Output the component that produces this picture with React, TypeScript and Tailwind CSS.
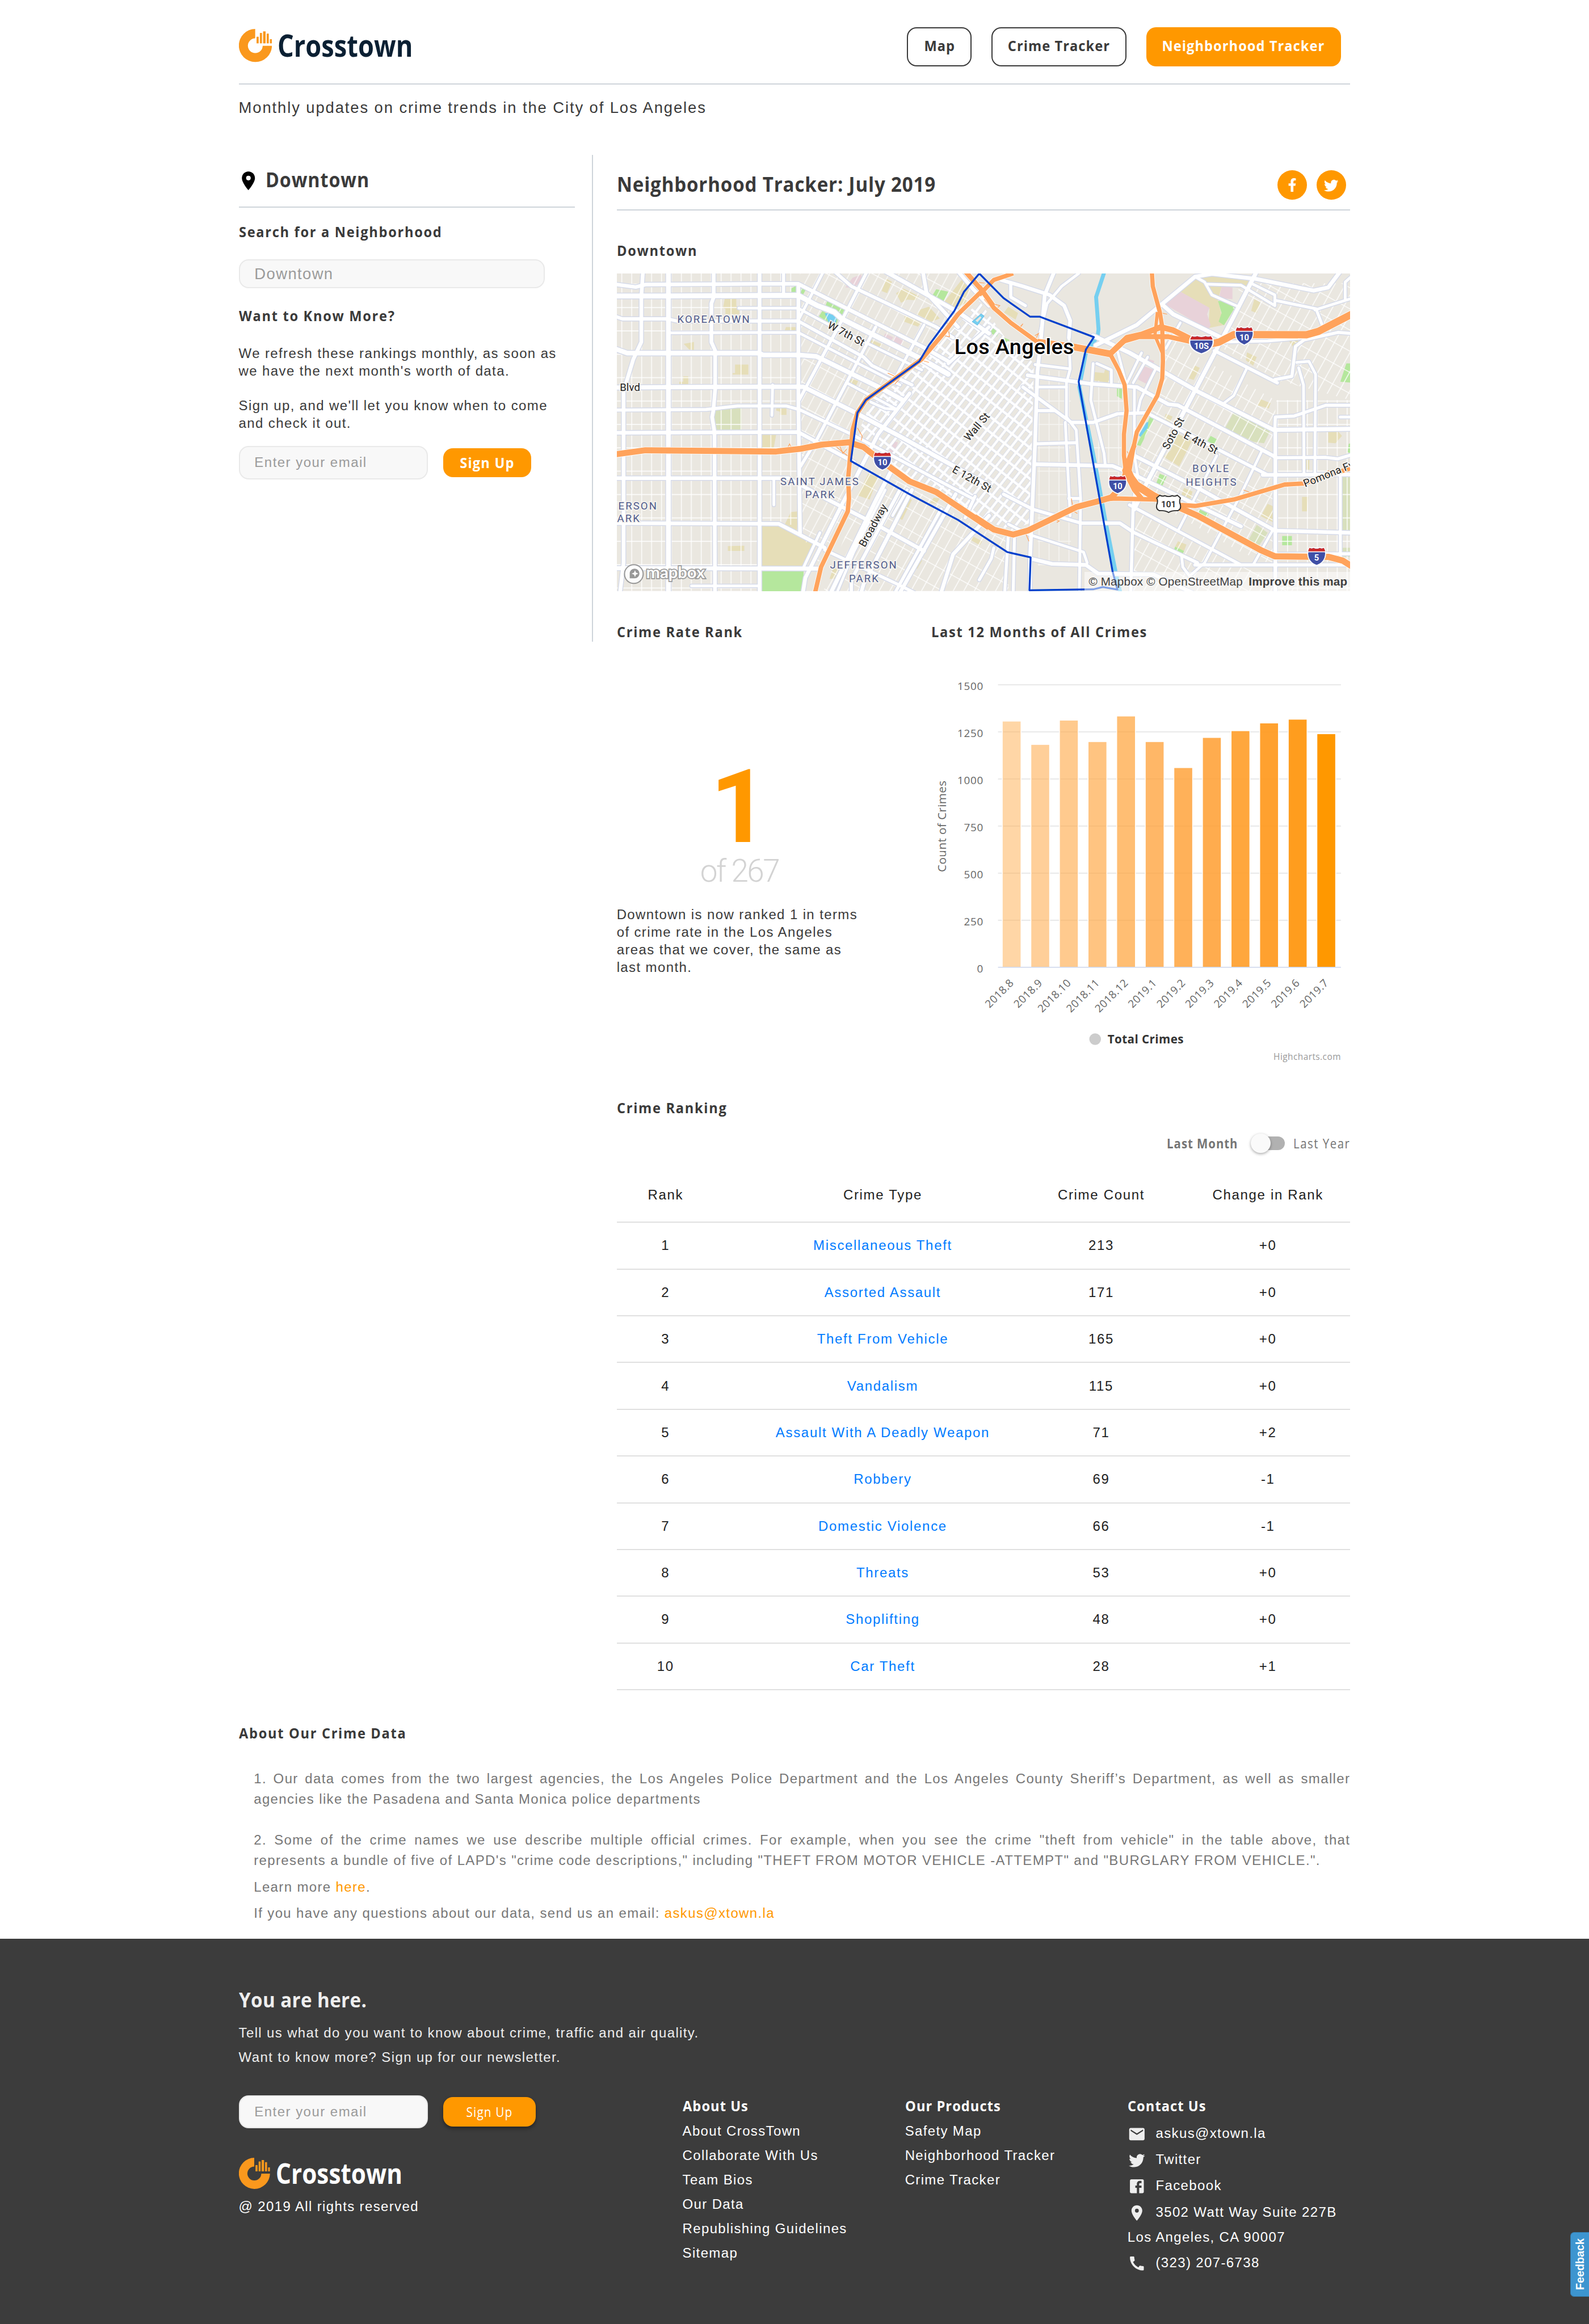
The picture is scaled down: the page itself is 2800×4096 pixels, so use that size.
import type { ReactNode } from "react";
import { MdCall, MdEmail, MdPlace } from "react-icons/md";
import { FaFacebookF } from "react-icons/fa";

/* ---------- shared pieces ---------- */

const TWITTER_PATH =
  "M22.46,6C21.69,6.35 20.86,6.58 20,6.69C20.88,6.16 21.56,5.32 21.88,4.31C21.05,4.81 20.13,5.16 19.16,5.36C18.37,4.5 17.26,4 16,4C13.65,4 11.73,5.92 11.73,8.29C11.73,8.63 11.77,8.96 11.84,9.27C8.28,9.09 5.11,7.38 3,4.79C2.63,5.42 2.42,6.16 2.42,6.94C2.42,8.43 3.17,9.75 4.33,10.5C3.62,10.5 2.96,10.3 2.38,10V10.03C2.38,12.11 3.86,13.85 5.82,14.24C5.46,14.34 5.08,14.39 4.69,14.39C4.42,14.39 4.15,14.36 3.89,14.31C4.43,16 6,17.26 7.89,17.29C6.43,18.45 4.58,19.13 2.56,19.13C2.22,19.13 1.88,19.11 1.54,19.07C3.44,20.29 5.7,21 8.12,21C16,21 20.33,14.46 20.33,8.79C20.33,8.6 20.33,8.42 20.32,8.23C21.16,7.63 21.88,6.87 22.46,6Z";
const FACEBOOK_BOX_PATH =
  "M5,3H19A2,2 0 0,1 21,5V19A2,2 0 0,1 19,21H5A2,2 0 0,1 3,19V5A2,2 0 0,1 5,3M18,5H15.5A3.5,3.5 0 0,0 12,8.5V11H10V14H12V21H15V14H18V11H15V9A1,1 0 0,1 16,8H18V5Z";

function TwitterIcon({ className }: { className: string }) {
  return (
    <svg viewBox="0 0 24 24" className={className} fill="currentColor">
      <path d={TWITTER_PATH} />
    </svg>
  );
}

function FacebookBoxIcon({ className }: { className: string }) {
  return (
    <svg viewBox="0 0 24 24" className={className} fill="currentColor">
      <path d={FACEBOOK_BOX_PATH} />
    </svg>
  );
}

function LogoMark({ className }: { className: string }) {
  return (
    <svg viewBox="0 0 34 34" className={className} fill="#fa981d">
      <path d="M16.7 0A17 17 0 1 0 33.9 17.3H24.4A7.6 7.6 0 1 1 16.7 9.6Z" />
      <rect x="18.1" y="8" width="2.2" height="6.8" />
      <rect x="21.5" y="4.1" width="2.2" height="10.7" />
      <rect x="24.8" y="2.5" width="2.6" height="12.3" />
      <rect x="28.5" y="4.8" width="2.2" height="10" />
      <rect x="31.8" y="10.5" width="2" height="4.3" />
    </svg>
  );
}

function SubHeading({ children }: { children: ReactNode }) {
  return (
    <h3 className="origin-left scale-x-[0.92] font-['Open_Sans',sans-serif] text-[15px] leading-[20px] font-bold tracking-[1.05px] whitespace-nowrap text-[#3a3a3a]">
      {children}
    </h3>
  );
}

/* ---------- header ---------- */

function Header() {
  return (
    <header>
      <div className="flex h-[87px] items-start justify-between border-b-[1.2px] border-[#ced4da] pt-[28px]">
        <div className="mt-[2px] flex items-start gap-[6px]">
          <LogoMark className="h-[34px] w-[34px]" />
          <span className="origin-left scale-x-[0.85] font-['Open_Sans',sans-serif] text-[31px] leading-[34px] font-bold text-[#0b2033]">
            Crosstown
          </span>
        </div>
        <nav className="mr-[9.5px] flex gap-[20px] font-['Open_Sans',sans-serif] text-[15px] font-bold tracking-[0.65px] whitespace-nowrap text-[#3a3a3a]">
          <a className="flex h-[40px] w-[66.5px] items-center justify-center rounded-[10px] border-[1.2px] border-[#3a3a3a] pb-[2px]">
            <span className="scale-x-[0.92]">Map</span>
          </a>
          <a className="flex h-[40px] w-[139px] items-center justify-center rounded-[10px] border-[1.2px] border-[#3a3a3a] pb-[2px]">
            <span className="scale-x-[0.92]">Crime Tracker</span>
          </a>
          <a className="flex h-[40px] w-[200px] items-center justify-center rounded-[10px] bg-[#ff9800] pb-[2px] text-white">
            <span className="scale-x-[0.92]">Neighborhood Tracker</span>
          </a>
        </nav>
      </div>
      <p className="pt-[11.5px] text-[16px] leading-[24px] tracking-[1.09px]">
        Monthly updates on crime trends in the City of Los Angeles
      </p>
    </header>
  );
}

/* ---------- sidebar ---------- */

function Sidebar() {
  return (
    <aside className="h-[500px] w-[364px] shrink-0 border-r-[1.2px] border-[#ced4da] pt-[11px] pr-[17.8px]">
      <div className="flex h-[42px] items-start">
        <MdPlace className="mt-[4px] -ml-[1.8px] h-[23px] w-[23px] text-black" />
        <h2 className="ml-[6.5px] origin-left scale-x-[0.92] font-['Open_Sans',sans-serif] text-[20.5px] leading-[28px] font-bold tracking-[0.55px]">
          Downtown
        </h2>
      </div>
      <div className="mb-[15px] h-px bg-[#ced4da]" />
      <SubHeading>Search for a Neighborhood</SubHeading>
      <div className="mt-[18px] mb-[18px] flex h-[30px] w-[314px] items-center rounded-[10px] border-[1.2px] border-[#e9e9e9] bg-[#f8f8f8] pl-[15px] text-[16px] tracking-[0.8px] text-[#9b9b9b]">
        Downtown
      </div>
      <SubHeading>Want to Know More?</SubHeading>
      <p className="mt-[20px] text-[14px] leading-[18px] tracking-[0.8px]">
        We refresh these rankings monthly, as soon as
        <br />
        we have the next month's worth of data.
      </p>
      <p className="mt-[18px] text-[14px] leading-[18px] tracking-[0.8px]">
        Sign up, and we'll let you know when to come
        <br />
        and check it out.
      </p>
      <div className="mt-[14px] flex items-center gap-[16px]">
        <div className="flex h-[34px] w-[194px] items-center rounded-[10px] border-[1.2px] border-[#e9e9e9] bg-[#f8f8f8] pl-[15px] text-[14px] tracking-[0.85px] text-[#9b9b9b]">
          Enter your email
        </div>
        <button className="h-[30px] w-[90px] rounded-[10px] bg-[#ff9800] text-center font-['Open_Sans',sans-serif] text-[15px] leading-[28px] font-bold tracking-[0.74px] text-white">
          <span className="inline-block scale-x-[0.92]">Sign Up</span>
        </button>
      </div>
    </aside>
  );
}

/* ---------- map ---------- */

/* The map artwork is digitised in two sheets, west and east of downtown. */
type Sheet = "w" | "e";
const ORIGIN: Record<Sheet, number> = { w: -8, e: 372 };

function pts(sheet: Sheet, raw: string): string {
  return raw
    .split(" ")
    .map((pair) => {
      const [x, y] = pair.split(",").map(Number);
      return `${(x / 4.0205 + ORIGIN[sheet]).toFixed(1)},${((y - 50) / 4.545).toFixed(1)}`;
    })
    .join(" ");
}

const roads: [Sheet, number, string][] = [
  // west: north-south
  ["w", 4, "140,40 133,160 133,370 100,450 60,600 60,1400 45,1540"],
  ["w", 5, "245,40 245,1540"],
  ["w", 4, "432,40 432,160 422,190 422,370 438,410 438,590 430,690 425,720 435,790 437,1540"],
  ["w", 4, "621,40 621,1540"],
  ["w", 3.4, "720,40 720,150"],
  ["w", 4, "781,100 781,640 788,1260"],
  ["w", 3, "675,570 672,712"],
  ["w", 3, "680,1005 680,1130"],
  // west: east-west
  ["w", 4, "20,100 110,113 150,102 620,98 780,98 1290,390 1400,460"],
  ["w", 5.4, "20,155 240,155 780,152 860,200 930,230 960,262 1290,450 1400,520"],
  ["w", 3.6, "20,248 55,262 240,262 280,272 780,272 1050,440 1085,480 1250,570"],
  ["w", 3, "535,212 780,212 900,285 1290,500"],
  ["w", 3, "250,327 780,325 960,430 1200,570"],
  ["w", 5, "20,400 75,422 620,422 635,430 780,430 855,437 1130,590 1210,640"],
  ["w", 4.6, "20,582 240,580 800,578 1000,690 1200,810 1568,1040"],
  ["w", 3.4, "20,687 400,685 530,668 730,668 785,685 1000,800 1500,1100"],
  ["w", 4, "20,793 780,790 1010,930"],
  ["w", 4, "20,1005 740,1005 860,1080 1100,1220 1300,1345"],
  ["w", 4, "20,1215 700,1218 890,1330"],
  ["w", 4.4, "20,1425 860,1427"],
  ["w", 3, "340,1508 620,1508"],
  ["w", 3.4, "890,1340 1190,1500 1260,1540"],
  // west: hillside and Westlake
  ["w", 3.6, "930,40 1000,110 1350,300 1420,350"],
  ["w", 4.4, "1140,40 1440,230 1568,330"],
  ["w", 4, "1295,40 1310,140 1440,300"],
  ["w", 4, "1440,40 1500,120 1568,200"],
  ["w", 3, "885,40 780,270"],
  ["w", 3.4, "1065,40 960,270 785,640"],
  ["w", 3.4, "1100,300 860,820 790,950"],
  ["w", 3, "1300,290 1170,560"],
  ["w", 3, "980,560 860,820"],
  ["w", 3.6, "1400,470 1568,300"],
  ["w", 3, "980,560 1180,680"],
  ["w", 3, "1080,650 1140,680 1190,685"],
  // west: south of the freeway
  ["w", 4, "1240,610 1110,800 960,1130 810,1470 800,1540"],
  ["w", 4.4, "1170,960 1105,1100 915,1540"],
  ["w", 4, "1250,1060 1050,1500 1040,1540"],
  ["w", 3.6, "1200,1060 1000,1480 1000,1540"],
  ["w", 2.8, "1140,1060 1010,1350 940,1540"],
  ["w", 3, "1230,1060 1170,1180"],
  ["w", 4, "1430,1080 1200,1540"],
  ["w", 3.4, "1370,1150 1180,1540"],
  ["w", 4, "1568,1180 1420,1360 1370,1540"],
  ["w", 3.4, "1510,1090 1470,1190"],
  ["w", 3, "870,1260 800,1427"],
  // east: civic centre and rail yards
  ["e", 4, "90,80 180,110 290,150 350,200 375,270 370,350"],
  ["e", 3, "410,50 340,110 280,190 250,330"],
  ["e", 4, "310,40 270,150 255,350 240,510 230,850 210,1370 210,1540"],
  ["e", 3.4, "130,100 130,160 190,200"],
  ["e", 3, "230,475 375,495"],
  ["e", 3, "370,350 375,495 360,560 360,720 400,780 418,1100 413,1540"],
  ["e", 4, "200,525 460,565 650,580 780,660 820,665 1220,905"],
  ["e", 3, "235,580 360,580"],
  ["e", 3.4, "235,690 310,690"],
  ["e", 3.6, "180,580 380,745 470,745 570,705 690,700 1190,990"],
  ["e", 3.4, "230,845 400,840"],
  ["e", 4, "230,940 550,948 640,990 1080,1230"],
  ["e", 3, "355,745 375,1180"],
  ["e", 3.6, "100,1080 220,1150 420,1215 580,1215 640,1260 900,1400 900,1410"],
  ["e", 3, "120,1220 210,1270 430,1350 445,1400"],
  ["e", 4, "210,1380 300,1405 440,1410 490,1450 720,1455 880,1540"],
  ["e", 3.4, "650,1000 635,1140 625,1540"],
  ["e", 3, "470,470 460,640 515,890 520,945"],
  ["e", 3, "485,470 545,500 545,560"],
  ["e", 3, "640,590 640,900 655,1000"],
  ["e", 3.2, "120,1270 105,1540"],
  ["e", 3.2, "145,1280 140,1540"],
  ["e", 3.2, "60,1330 50,1380 0,1480"],
  ["e", 3.4, "370,1100 410,1100"],
  // east: Boyle Heights
  ["e", 4.2, "480,385 650,290 890,65 960,52 1140,75 1380,130 1440,115 1490,40"],
  ["e", 4.4, "760,200 800,240 1000,350"],
  ["e", 3, "890,65 930,90 960,150 1060,200"],
  ["e", 3, "940,100 1080,105 1220,200 1220,150 1120,95"],
  ["e", 4.4, "1145,40 1050,250 690,1030 640,1150"],
  ["e", 3.6, "970,410 1230,560"],
  ["e", 4.4, "470,340 620,420 730,490 900,600 1215,780 1532,775"],
  ["e", 4, "640,900 900,1050 1220,1250 1532,1260"],
  ["e", 3.4, "620,1130 1080,1410"],
  ["e", 3.4, "1220,910 1430,908 1480,915 1540,895"],
  ["e", 4, "1170,990 1540,988"],
  ["e", 3.6, "890,1410 1540,1410"],
  ["e", 3.4, "1220,1360 1540,1358"],
  ["e", 3.4, "1220,780 1222,720 1300,715 1430,665 1540,665"],
  ["e", 3.2, "1490,720 1540,720"],
  ["e", 4, "1222,780 1222,1540"],
  ["e", 3.2, "1490,1000 1490,1400"],
  ["e", 3, "1318,490 1338,570 1340,990"],
  ["e", 3, "1310,465 1360,460 1388,520 1385,990"],
  ["e", 3.4, "1220,545 1290,530 1305,390 1340,360 1480,325 1540,330"],
  ["e", 3.2, "1000,370 1190,365 1340,350"],
  ["e", 3, "1385,220 1540,165"],
  ["e", 3.2, "1220,175 1390,215 1415,290"],
  ["e", 3, "1540,60 1510,90 1510,170"],
  ["e", 2.8, "1105,490 1050,620 1010,655"],
  ["e", 2.8, "1165,880 1080,1080 930,1400 870,1460"],
  ["e", 2.8, "980,900 870,1140 820,1250"],
  ["e", 2.8, "1210,1250 1130,1410"],
  ["e", 2.8, "730,490 665,640 655,690"],
  ["e", 2.8, "570,410 605,560"],
  ["e", 2.8, "670,420 610,560"],
  ["e", 2.8, "695,440 635,560"],
  ["e", 2.8, "830,280 770,400"],
  ["e", 3, "835,1370 840,1420 880,1480"],
];

const freeways: [Sheet, number, string][] = [
  ["w", 6.2, "20,895 150,875 690,881 790,868 880,848 990,838 1050,860 1130,930 1240,1020 1350,1070 1568,1235"],
  ["e", 6.2, "-20,1186 60,1245 140,1268 200,1250 400,1140 500,1110 545,1095 590,1040 605,980"],
  ["w", 4.6, "1540,130 1440,240 1380,330 1290,450 1060,640 1025,700 1005,780 995,900 987,1000 990,1100 985,1160 875,1420 850,1540"],
  ["w", 5, "1470,40 1540,130 1585,200"],
  ["e", 4.4, "0,150 60,80 140,50"],
  ["e", 4.6, "0,110 60,210 130,280 240,370"],
  ["e", 7, "240,370 400,395 540,425"],
  ["e", 6, "540,425 610,350 670,335 750,300 800,315 880,360"],
  ["e", 5, "600,365 660,345 780,345 900,375"],
  ["e", 7.5, "880,365 930,385 990,370 1050,335 1350,336 1400,320 1540,238"],
  ["e", 4.4, "540,425 575,500 600,570 608,690 597,800 597,900 605,980"],
  ["e", 4.4, "712,40 716,110 745,230 755,300 758,460 755,540 735,620 650,790 635,870 620,970 650,1050 720,1100"],
  ["e", 3.4, "735,230 725,340 755,420"],
  ["e", 5, "640,850 600,970 640,1060 670,1100"],
  ["e", 6.4, "600,960 650,1035 720,1085 780,1120 900,1180 1160,1340 1220,1370 1440,1372 1500,1390 1540,1418"],
  ["e", 4.6, "500,1105 560,1100 730,1105 830,1130 890,1135 1050,1105 1260,1035 1340,1030 1540,956"],
];

const ramps: [Sheet, string][] = [
  ["w", "905,828 960,880 985,900 1010,850"],
  ["w", "1025,770 1045,810 1040,830"],
  ["w", "950,850 965,890 980,870"],
  ["w", "735,868 745,845 755,868"],
  ["w", "1150,515 1200,540 1180,565"],
  ["w", "1290,455 1320,465"],
  ["w", "1380,340 1405,345 1395,280"],
  ["w", "1510,90 1550,95"],
  ["e", "20,170 60,225 85,200 50,190"],
  ["e", "230,340 245,330 235,350"],
  ["e", "160,310 180,285 170,300"],
  ["e", "380,1100 390,1160 405,1170"],
  ["e", "315,1200 330,1205 320,1212"],
  ["e", "1090,1060 1125,1075 1085,1100"],
  ["e", "1430,1000 1440,970 1480,975"],
  ["e", "190,1260 205,1300"],
  ["e", "610,880 620,900"],
  ["e", "755,235 775,240"],
  ["e", "550,460 575,475"],
];

const patches: [Sheet, string, string][] = [
  ["w", "#b5e79d", "752,120 775,105 812,125 800,150 752,140"],
  ["w", "#b5e79d", "900,180 970,220 960,248 890,210"],
  ["w", "#b5e79d", "880,225 945,265 935,300 866,250"],
  ["w", "#75cff0", "890,237 925,230 940,255 935,285 905,275"],
  ["w", "#b5e79d", "1350,123 1400,135 1380,180 1335,152"],
  ["w", "#b5e79d", "630,1435 803,1435 800,1540 630,1540"],
  ["w", "#d8e0bd", "432,682 547,675 547,782 432,782"],
  ["w", "#e6deb8", "478,165 525,165 525,200 537,212 537,240 480,240 480,215 470,212"],
  ["w", "#e6deb8", "308,378 350,370 350,408 330,404"],
  ["w", "#e6deb8", "520,475 575,475 575,522 510,522 510,515 520,515"],
  ["w", "#e6deb8", "306,530 327,530 327,567 290,567 290,555 306,555"],
  ["w", "#e6deb8", "628,1222 705,1225 855,1318 805,1420 628,1418"],
  ["w", "#e6deb8", "630,800 690,800 680,862 630,862"],
  ["w", "#e6deb8", "690,675 732,675 732,710 705,710 705,695 690,690"],
  ["w", "#e6deb8", "730,300 770,300 770,316 725,316"],
  ["w", "#e6deb8", "1070,985 1110,1000 1075,1105 1025,1085"],
  ["w", "#e6deb8", "1215,1090 1250,1105 1210,1200 1178,1185"],
  ["w", "#e6deb8", "750,1163 780,1160 775,1250 725,1222"],
  ["w", "#e6deb8", "1215,120 1278,155 1265,175 1230,172 1205,187 1185,142"],
  ["w", "#e6deb8", "1320,205 1365,260 1330,275 1270,240 1285,218"],
  ["w", "#e6deb8", "1220,248 1290,275 1275,298 1218,275"],
  ["w", "#e6deb8", "1455,80 1490,100 1470,190 1430,210 1385,180"],
  ["w", "#e6deb8", "1145,75 1168,88 1148,142 1125,132"],
  ["w", "#e6deb8", "490,1322 558,1320 558,1345 490,1345"],
  ["w", "#e6deb8", "1080,358 1128,382 1115,395 1070,378"],
  ["w", "#e6deb8", "995,540 1028,552 1015,582 988,568"],
  ["w", "#e6deb8", "925,1425 975,1440 955,1475 910,1475"],
  ["w", "#e6deb8", "1262,1375 1292,1390 1272,1428 1245,1415"],
  ["w", "#e6deb8", "1340,1095 1365,1100 1350,1125 1325,1120"],
  ["w", "#e6deb8", "1500,1275 1540,1300 1530,1318 1490,1292"],
  ["w", "#e8d2d9", "1005,70 1040,55 1045,78 1010,118 975,115"],
  ["w", "#e8d2d9", "1180,340 1215,365 1195,398 1165,380"],
  ["w", "#e8d2d9", "1140,330 1172,348 1165,362 1133,345"],
  ["w", "#e8d2d9", "1175,832 1192,838 1175,888 1155,880"],
  ["e", "#e6deb8", "830,135 880,85 920,60 960,58 1115,80 1100,122 1045,112 1000,110 985,175 1010,290 945,305 950,215"],
  ["e", "#e8d2d9", "760,190 830,135 950,210 940,240 955,290 945,312"],
  ["e", "#e8d2d9", "1000,110 1045,115 1045,170 990,165"],
  ["e", "#b5e79d", "985,178 1035,175 1060,200 1010,292 988,275 1000,235"],
  ["e", "#e8d2d9", "675,480 722,500 690,565 655,545"],
  ["e", "#e8d2d9", "700,450 722,458 718,470 697,462"],
  ["e", "#b5e79d", "1515,470 1540,470 1540,560 1490,555"],
  ["e", "#b5e79d", "705,718 722,730 665,855 650,850"],
  ["e", "#75cff0", "690,745 698,742 695,770 665,812 658,805"],
  ["e", "#b5e79d", "568,583 590,583 588,635 568,622"],
  ["e", "#b5e79d", "955,808 983,825 970,850 938,838"],
  ["e", "#b5e79d", "745,985 773,997 755,1042 730,1030"],
  ["e", "#b5e79d", "910,1145 952,1145 945,1180 920,1192 902,1185"],
  ["e", "#b5e79d", "1250,1275 1290,1275 1290,1318 1250,1318"],
  ["e", "#e6deb8", "820,1300 855,1315 845,1345 808,1325"],
  ["e", "#b5e79d", "808,1325 845,1345 838,1362 802,1345"],
  ["e", "#b5e79d", "50,293 82,325 72,345 35,320"],
  ["e", "#b5e79d", "95,345 125,360 115,378"],
  ["e", "#d8e0bd", "1050,697 1200,785 1175,842 1130,835 1015,770"],
  ["e", "#d8e0bd", "1145,1223 1190,1260 1150,1327 1108,1300"],
  ["e", "#d8e0bd", "1492,1000 1540,1000 1540,1250 1492,1250"],
  ["e", "#d8e0bd", "1498,1330 1540,1330 1540,1372 1498,1372"],
  ["e", "#e6deb8", "820,800 878,830 825,950 760,905 790,875"],
  ["e", "#e6deb8", "845,1050 880,1068 870,1105 832,1090"],
  ["e", "#e6deb8", "475,510 515,515 520,495 535,500 535,560 475,550"],
  ["e", "#e6deb8", "890,480 910,490 885,547 865,540"],
  ["e", "#e6deb8", "1190,1125 1220,1140 1215,1212 1162,1182"],
  ["e", "#e6deb8", "1440,785 1480,785 1497,808 1470,842 1440,840"],
  ["e", "#e6deb8", "120,205 160,235 150,265 102,232"],
  ["e", "#e6deb8", "1105,418 1145,440 1130,480 1100,455"],
  ["e", "#e6deb8", "1158,635 1202,655 1195,680 1148,665"],
  ["e", "#e6deb8", "1275,360 1320,365 1300,400"],
  ["e", "#e6deb8", "1135,170 1160,185 1145,235 1122,225"],
  ["e", "#e6deb8", "1332,1092 1358,1092 1352,1160 1332,1160"],
  ["e", "#e6deb8", "770,705 798,718 785,748 760,738"],
  ["e", "#e6deb8", "1347,915 1362,915 1362,965 1347,965"],
  ["e", "#b5e79d", "1525,845 1540,840 1540,890 1520,885"],
];

const BOUNDARY =
  pts("e", "0,50 100,165 210,252 250,252 473,347 440,405 410,555 550,1440 570,1525 510,1513 470,1524 207,1528 212,1375 115,1350 0,1265") +
  " " +
  pts("w", "1440,1200 1240,1080 998,925 1025,700 1060,640 1280,460 1320,385 1425,225 1465,135 1528,50");

const LA_RIVER = pts("e", "517,40 482,160 492,310 488,345 472,370 440,420 413,580 450,780 480,950 520,1200 562,1440 582,1540");

function Interstate({ x, y, label, wide }: { x: number; y: number; label: string; wide?: boolean }) {
  const s = wide ? 1.32 : 1;
  return (
    <g transform={`translate(${x} ${y})`}>
      <g transform={`scale(${s} 1)`}>
        <path
          d="M-7.4 -9.2Q-5 -7.8 -3.4 -9.2Q0 -7.4 3.4 -9.2Q5 -7.8 7.4 -9.2Q9.2 -6 9.2 -2.6Q8.8 6.2 0 9.4Q-8.8 6.2 -9.2 -2.6Q-9.2 -6 -7.4 -9.2Z"
          fill="#3f4fa6"
          stroke="#fff"
          strokeWidth="1"
        />
        <path d="M-7.3 -8.7Q-5 -7.2 -3.4 -8.6Q0 -6.8 3.4 -8.6Q5 -7.2 7.3 -8.7Q8.4 -7 8.7 -5H-8.7Q-8.4 -7 -7.3 -8.7Z" fill="#cb2a2a" />
        <rect x="-9" y="-5.1" width="18" height="0.9" fill="#fff" />
      </g>
      <text y="4.5" textAnchor="middle" fill="#fff" className="font-['Roboto',sans-serif] text-[8.6px] font-bold">
        {label}
      </text>
    </g>
  );
}

const AREA = "font-['Roboto',sans-serif] text-[10.8px] tracking-[1.25px]";
const STREET = "font-['Roboto',sans-serif] text-[10.8px] tracking-[0.1px]";

function CityMap() {
  return (
    <div className="relative mt-[14px] h-[326px] w-[753px] overflow-hidden">
      <svg viewBox="0 0 753 326" className="block h-[326px] w-[753px]">
        <defs>
          <pattern id="gridWest" width="10.2" height="24" patternUnits="userSpaceOnUse">
            <path d="M5 0V24M0 11H10.2" stroke="#fff" strokeWidth="0.8" fill="none" />
          </pattern>
          <pattern id="gridHill" width="9" height="22" patternUnits="userSpaceOnUse" patternTransform="rotate(28)">
            <path d="M4 0V22M0 9H9" stroke="#fff" strokeWidth="0.7" fill="none" />
          </pattern>
          <pattern id="gridCore" width="7.6" height="12.5" patternUnits="userSpaceOnUse" patternTransform="rotate(38)">
            <path d="M3 0V12.5M0 5H7.6" stroke="#d5dae9" strokeWidth="3.4" fill="none" />
            <path d="M3 0V12.5M0 5H7.6" stroke="#fff" strokeWidth="2.5" fill="none" />
          </pattern>
          <pattern id="gridEast" width="9.5" height="19" patternUnits="userSpaceOnUse" patternTransform="rotate(29)">
            <path d="M4 0V19M0 9H9.5" stroke="#fff" strokeWidth="0.8" fill="none" />
          </pattern>
        </defs>
        <rect width="753" height="326" fill="#eae7e0" />
        {patches.map(([s, fill, p], i) => (
          <polygon key={i} points={pts(s, p)} fill={fill} />
        ))}
        <rect width="186" height="258" fill="url(#gridWest)" />
        <rect y="258" width="148" height="68" fill="url(#gridWest)" />
        <polygon points="188,0 360,0 368,22 310,90 256,130 241,172 240,190 188,160" fill="url(#gridHill)" />
        <polygon points="188,166 238,192 236,250 205,300 188,262" fill="url(#gridHill)" />
        <polygon points="245,195 300,218 372,262 402,272 402,326 212,326 236,265" fill="url(#gridEast)" />
        <polygon points="312,92 260,134 246,168 262,178 300,210 372,250 404,264 424,256 428,92 400,68 372,28 350,52" fill="url(#gridCore)" />
        <polygon points="560,54 590,82 676,130 676,300 640,286 540,228 532,200 556,120" fill="url(#gridEast)" />
        <polygon points="530,240 640,300 700,326 530,326" fill="url(#gridEast)" />
        <polygon points="640,10 753,10 753,130 680,110 620,76" fill="url(#gridEast)" />
        <rect x="677" y="130" width="76" height="196" fill="url(#gridWest)" />
        <rect x="432" y="100" width="34" height="200" fill="url(#gridWest)" opacity="0.6" />
        <rect x="486" y="110" width="34" height="110" fill="url(#gridWest)" opacity="0.7" />
        <polyline points={LA_RIVER} fill="none" stroke="#75cff0" strokeWidth="4" />
        {roads.map(([s, w, p], i) => (
          <polyline key={i} points={pts(s, p)} fill="none" stroke="#d5dae9" strokeWidth={w + 1.5} strokeLinecap="round" strokeLinejoin="round" />
        ))}
        {roads.map(([s, w, p], i) => (
          <polyline key={i} points={pts(s, p)} fill="none" stroke="#fff" strokeWidth={w - 0.2} strokeLinecap="round" strokeLinejoin="round" />
        ))}
        <polygon points={pts("w", "1498,275 1535,238 1548,248 1520,292")} fill="#75cff0" stroke="#4fa6dc" strokeWidth="0.4" />
        <polygon points={pts("w", "1512,270 1532,250 1537,256 1520,277")} fill="#eae7e0" />
        {ramps.map(([s, p], i) => (
          <polyline key={i} points={pts(s, p)} fill="none" stroke="#ffa35c" strokeWidth="0.7" />
        ))}
        {freeways.map(([s, w, p], i) => (
          <polyline key={i} points={pts(s, p)} fill="none" stroke="#fff" strokeWidth={w + 1} strokeLinejoin="round" />
        ))}
        {freeways.map(([s, w, p], i) => (
          <polyline key={i} points={pts(s, p)} fill="none" stroke="#ffa35c" strokeWidth={w} strokeLinejoin="round" />
        ))}
        <polygon points={BOUNDARY} fill="none" stroke="#0040cc" strokeWidth="1.9" strokeLinejoin="round" />

        <g fill="#4f5b8c" stroke="#f6f4f0" strokeWidth="2" paintOrder="stroke" className={AREA}>
          <text x="62" y="50.6">KOREATOWN</text>
          <text x="208.5" y="217" textAnchor="middle">SAINT JAMES</text>
          <text x="209" y="230.8" textAnchor="middle">PARK</text>
          <text x="253.5" y="303" textAnchor="middle">JEFFERSON</text>
          <text x="254" y="317" textAnchor="middle">PARK</text>
          <text x="42" y="242.6" textAnchor="end">FERSON</text>
          <text x="24.5" y="255.4" textAnchor="end">PARK</text>
          <text x="610" y="204" textAnchor="middle">BOYLE</text>
          <text x="610.5" y="217.6" textAnchor="middle">HEIGHTS</text>
        </g>
        <g fill="#222" stroke="#f6f4f0" strokeWidth="2" paintOrder="stroke" className={STREET}>
          <text x="3" y="120.4">Blvd</text>
          <text transform="translate(215.5 55.5) rotate(28)">W 7th St</text>
          <text transform="translate(361.5 172.5) rotate(-50)">Wall St</text>
          <text transform="translate(343.5 203.5) rotate(29)">E 12th St</text>
          <text transform="translate(254.5 281.5) rotate(-61)">Broadway</text>
          <text transform="translate(566 181.5) rotate(-62)">Soto St</text>
          <text transform="translate(581 168.5) rotate(27)">E 4th St</text>
          <text transform="translate(706.5 219.5) rotate(-22)">Pomona Fwy</text>
        </g>
        <text x="346.5" y="82.5" fill="#000" stroke="#fff" strokeWidth="2.4" paintOrder="stroke" className="font-['Roboto',sans-serif] text-[22px] font-medium tracking-[0.2px]">
          Los Angeles
        </text>

        <Interstate x={272.6} y={192.5} label="10" />
        <Interstate x={514} y={216.7} label="10" />
        <Interstate x={600} y={73} label="10S" wide />
        <Interstate x={644} y={64} label="10" />
        <Interstate x={718.3} y={290.4} label="5" />
        <g transform="translate(566.3 236.5)">
          <path
            d="M-9 -8.8Q-6.5 -7.2 -3.8 -8.4Q0 -6.6 3.8 -8.4Q6.5 -7.2 9 -8.8L12.2 -6Q10.4 -3 12.2 1.2Q13 5.6 9.4 7Q4 6.6 0 8.8Q-4 6.6 -9.4 7Q-13 5.6 -12.2 1.2Q-10.4 -3 -12.2 -6Z"
            fill="#fff"
            stroke="#2b2b2b"
            strokeWidth="1.1"
          />
          <text y="3.6" textAnchor="middle" fill="#222" className="font-['Roboto',sans-serif] text-[9px] font-medium">
            101
          </text>
        </g>

        <g opacity="0.9">
          <circle cx="17.4" cy="308.6" r="9.6" fill="#fff" stroke="#8f8f8f" strokeWidth="1.2" />
          <path d="M13.2 313V308.4A5 5 0 1 1 18.2 313Z" fill="#8f8f8f" />
          <path d="M18.6 304.6L19.6 307.1L22.1 308.1L19.6 309.1L18.6 311.6L17.6 309.1L15.1 308.1L17.6 307.1Z" fill="#fff" />
          <text x="30" y="312.6" fill="#fff" stroke="#8f8f8f" strokeWidth="2" paintOrder="stroke" className="font-['Lato',sans-serif] text-[17px] font-bold">
            mapbox
          </text>
        </g>
      </svg>
      <div className="absolute right-0 bottom-0 flex h-[20px] w-[273px] items-center gap-[6px] bg-white/50 pl-[4.5px] text-[12px] leading-[20px] tracking-[0.13px] whitespace-nowrap text-[#404040]">
        <span>© Mapbox © OpenStreetMap</span>
        <span className="font-bold">Improve this map</span>
      </div>
    </div>
  );
}

/* ---------- rank and chart ---------- */

const months = [
  { label: "2018.8", count: 1305, fill: "#ffb055", opacity: 0.52 },
  { label: "2018.9", count: 1181, fill: "#ffad4f", opacity: 0.58 },
  { label: "2018.10", count: 1310, fill: "#ffaa48", opacity: 0.62 },
  { label: "2018.11", count: 1196, fill: "#ffa640", opacity: 0.66 },
  { label: "2018.12", count: 1332, fill: "#ffa338", opacity: 0.7 },
  { label: "2019.1", count: 1196, fill: "#ffa137", opacity: 0.76 },
  { label: "2019.2", count: 1058, fill: "#ffa035", opacity: 0.82 },
  { label: "2019.3", count: 1218, fill: "#ffa035", opacity: 0.88 },
  { label: "2019.4", count: 1254, fill: "#ff9f2c", opacity: 0.92 },
  { label: "2019.5", count: 1295, fill: "#ff9c24", opacity: 0.95 },
  { label: "2019.6", count: 1315, fill: "#ff9a17", opacity: 0.97 },
  { label: "2019.7", count: 1238, fill: "#ff9800", opacity: 1 },
];

function CrimeChart() {
  const base = 334.8;
  const unit = 0.19333;
  return (
    <svg viewBox="0 0 430 440" className="block h-[440px] w-[430px] font-['Open_Sans',sans-serif]">
      {[0, 250, 500, 750, 1000, 1250, 1500].map((v) => (
        <g key={v}>
          {v > 0 && <line x1="68.5" x2="420.5" y1={base - v * unit} y2={base - v * unit} stroke="#e6e6e6" strokeWidth="1" />}
          <text x="53.6" y={base - v * unit + 5.2} textAnchor="end" fill="#666" className="text-[11px] tracking-[0.4px]">
            {v}
          </text>
        </g>
      ))}
      {months.map((m, i) => (
        <g key={m.label}>
          <rect x={73.2 + i * 29.36} y={base - m.count * unit} width="18.6" height={m.count * unit} fill="none" stroke="#fff" strokeWidth="1.4" />
          <rect x={73.3 + i * 29.36} y={base - m.count * unit} width="18.4" height={m.count * unit} fill={m.fill} opacity={m.opacity} />
          <text transform={`translate(${85.4 + i * 29.36} 351.6) rotate(-45)`} textAnchor="end" fill="#666" className="text-[11px] tracking-[0.3px]">
            {m.label}
          </text>
        </g>
      ))}
      <line x1="68.5" x2="420.5" y1={base} y2={base} stroke="#ccd6eb" strokeWidth="1" />
      <text transform="translate(15 190) rotate(-90)" textAnchor="middle" fill="#666" className="text-[12px] tracking-[0.25px]">
        Count of Crimes
      </text>
      <circle cx="168.2" cy="408.6" r="6" fill="#ccc" />
      <text x="181" y="413.2" fill="#333" className="text-[12px] font-bold tracking-[0.25px]">
        Total Crimes
      </text>
      <text x="420.5" y="429.8" textAnchor="end" fill="#999" className="text-[9px] tracking-[0.25px]">
        Highcharts.com
      </text>
    </svg>
  );
}

function RankAndChart() {
  return (
    <section className="mt-[31.5px] flex h-[488.5px]">
      <div className="w-[323px]">
        <SubHeading>Crime Rate Rank</SubHeading>
        <div className="w-[252px] text-center font-['Roboto',sans-serif]">
          <div className="mt-[131px] text-[104.5px] leading-[80px] font-bold text-[#ff9800]">1</div>
          <div className="mt-[7px] text-[32px] leading-[36px] font-light tracking-[-1.5px] text-[#d3d3d3]">of 267</div>
        </div>
        <p className="mt-[18px] text-[14px] leading-[18px] tracking-[0.8px]">
          Downtown is now ranked 1 in terms
          <br />
          of crime rate in the Los Angeles
          <br />
          areas that we cover, the same as
          <br />
          last month.
        </p>
      </div>
      <div className="w-[430px]">
        <SubHeading>Last 12 Months of All Crimes</SubHeading>
        <CrimeChart />
      </div>
    </section>
  );
}

/* ---------- ranking table ---------- */

const crimes = [
  ["Miscellaneous Theft", "213", "+0"],
  ["Assorted Assault", "171", "+0"],
  ["Theft From Vehicle", "165", "+0"],
  ["Vandalism", "115", "+0"],
  ["Assault With A Deadly Weapon", "71", "+2"],
  ["Robbery", "69", "-1"],
  ["Domestic Violence", "66", "-1"],
  ["Threats", "53", "+0"],
  ["Shoplifting", "48", "+0"],
  ["Car Theft", "28", "+1"],
];

const ROW = "grid grid-cols-[100.4px_35px_275.4px_173.2px_169px] items-center border-b-[1.2px] border-[#e0e0e0] text-center";

function RankingTable() {
  return (
    <section>
      <SubHeading>Crime Ranking</SubHeading>
      <div className="mt-[17px] flex h-[20px] items-center justify-end font-['Open_Sans',sans-serif] text-[13.5px] leading-[20px] whitespace-nowrap text-[#757575]">
        <span className="origin-right scale-x-[0.88] font-bold tracking-[0.65px]">Last Month</span>
        <span className="relative ml-[14.5px] h-[14px] w-[34px] rounded-full bg-[#b1b1b1]">
          <span className="absolute -top-[3px] -left-[1px] h-[20px] w-[20px] rounded-full bg-[#fafafa] shadow-[0_1px_3px_rgba(0,0,0,0.35)]" />
        </span>
        <span className="ml-[8.5px] w-[58.5px] origin-left scale-x-[0.88] tracking-[1px]">Last Year</span>
      </div>
      <div className="mt-[15.5px] text-[14px] tracking-[0.97px] text-[#212121]">
        <div className={`${ROW} h-[56px]`}>
          <span>Rank</span>
          <span />
          <span>Crime Type</span>
          <span>Crime Count</span>
          <span>Change in Rank</span>
        </div>
        {crimes.map(([type, count, change], i) => (
          <div key={type} className={`${ROW} h-[48px]`}>
            <span>{i + 1}</span>
            <span />
            <a className="text-[#007bff]">{type}</a>
            <span>{count}</span>
            <span>{change}</span>
          </div>
        ))}
      </div>
    </section>
  );
}

function Main() {
  return (
    <main className="ml-[24px] w-[753px] pt-[16px]">
      <div className="flex h-[40px] items-start justify-between pr-[4.5px]">
        <h1 className="-mt-px origin-left scale-x-[0.92] font-['Open_Sans',sans-serif] text-[21px] leading-[30px] font-bold tracking-[0.51px] whitespace-nowrap">
          Neighborhood Tracker: July 2019
        </h1>
        <div className="flex gap-[10px] text-white">
          <a className="flex h-[30px] w-[30px] items-center justify-center rounded-full bg-[#ff9800]">
            <FaFacebookF className="h-[14px] w-[14px]" />
          </a>
          <a className="flex h-[30px] w-[30px] items-center justify-center rounded-full bg-[#ff9800]">
            <TwitterIcon className="h-[17px] w-[17px]" />
          </a>
        </div>
      </div>
      <div className="mb-[31px] h-px bg-[#ced4da]" />
      <SubHeading>Downtown</SubHeading>
      <CityMap />
      <RankAndChart />
      <RankingTable />
    </main>
  );
}

/* ---------- about ---------- */

function About() {
  return (
    <section className="mt-[33.5px]">
      <SubHeading>About Our Crime Data</SubHeading>
      <div className="mt-[27px] pl-[15.5px] text-[14px] leading-[21px] tracking-[0.79px] text-[#777]">
        <p className="text-justify">
          1. Our data comes from the two largest agencies, the Los Angeles Police Department and the Los Angeles County Sheriff’s Department, as
          well as smaller agencies like the Pasadena and Santa Monica police departments
        </p>
        <p className="mt-[21px]">
          <span className="block text-justify [text-align-last:justify]">
            2. Some of the crime names we use describe multiple official crimes. For example, when you see the crime "theft from vehicle" in the
            table above, that
          </span>
          represents a bundle of five of LAPD's "crime code descriptions," including "THEFT FROM MOTOR VEHICLE -ATTEMPT" and "BURGLARY FROM
          VEHICLE.".
        </p>
        <p className="mt-[6px]">
          Learn more <a className="text-[#ff9800]">here</a>.
        </p>
        <p className="mt-[6px]">
          If you have any questions about our data, send us an email: <a className="text-[#ff9800]">askus@xtown.la</a>
        </p>
      </div>
    </section>
  );
}

/* ---------- footer ---------- */

function FooterHeading({ children }: { children: ReactNode }) {
  return (
    <h4 className="h-[26.6px] origin-left scale-x-[0.92] font-['Open_Sans',sans-serif] text-[15px] leading-[25px] font-bold tracking-[0.65px] whitespace-nowrap text-white">
      {children}
    </h4>
  );
}

const ICON = "mt-[1px] h-[19px] w-[19px] text-[#eee]";

function Footer() {
  return (
    <footer className="relative h-[395.5px] bg-[#3c3c3c] px-[245px] pt-[47.5px] text-[14px] leading-[25px] tracking-[0.79px] text-white">
      <h2 className="origin-left scale-x-[0.92] font-['Open_Sans',sans-serif] text-[21px] leading-[30px] font-bold tracking-[0.24px] text-[#eee]">
        You are here.
      </h2>
      <p className="mt-[6.7px] text-[#eee]">
        Tell us what do you want to know about crime, traffic and air quality.
        <br />
        Want to know more? Sign up for our newsletter.
      </p>
      <div className="mt-[24.5px] flex">
        <div className="mt-[2px] w-[455.5px]">
          <div className="flex items-center gap-[16px]">
            <div className="flex h-[34px] w-[194px] items-center rounded-[10px] border-[1.2px] border-[#e9e9e9] bg-[#f8f8f8] pl-[15px] tracking-[0.85px] text-[#9b9b9b]">
              Enter your email
            </div>
            <button className="h-[30px] w-[95px] rounded-[10px] bg-[#ff9800] text-center font-['Open_Sans',sans-serif] text-[13.5px] leading-[28px] font-medium tracking-[0.7px] shadow-[0_2px_4px_rgba(0,0,0,0.4)]">
              <span className="inline-block scale-x-[0.9]">Sign Up</span>
            </button>
          </div>
          <div className="mt-[30px] flex items-start gap-[6px]">
            <LogoMark className="h-[32px] w-[32px]" />
            <span className="origin-left scale-x-[0.85] font-['Open_Sans',sans-serif] text-[29px] leading-[32px] font-bold tracking-[0px]">Crosstown</span>
          </div>
          <p className="mt-[6px]">@ 2019 All rights reserved</p>
        </div>
        <div className="w-[228.4px]">
          <FooterHeading>About Us</FooterHeading>
          <p>About CrossTown</p>
          <p>Collaborate With Us</p>
          <p>Team Bios</p>
          <p>Our Data</p>
          <p>Republishing Guidelines</p>
          <p>Sitemap</p>
        </div>
        <div className="w-[228.4px]">
          <FooterHeading>Our Products</FooterHeading>
          <p>Safety Map</p>
          <p>Neighborhood Tracker</p>
          <p>Crime Tracker</p>
        </div>
        <div>
          <FooterHeading>Contact Us</FooterHeading>
          <p className="mt-px flex h-[27px] items-center gap-[10px]">
            <MdEmail className={ICON} />
            askus@xtown.la
          </p>
          <p className="flex h-[27px] items-center gap-[10px]">
            <TwitterIcon className={ICON} />
            Twitter
          </p>
          <p className="flex h-[27px] items-center gap-[10px]">
            <FacebookBoxIcon className={ICON} />
            Facebook
          </p>
          <p className="flex h-[27px] items-center gap-[10px]">
            <MdPlace className={ICON} />
            3502 Watt Way Suite 227B
          </p>
          <p>Los Angeles, CA 90007</p>
          <p className="flex h-[27px] items-center gap-[10px]">
            <MdCall className={ICON} />
            (323) 207-6738
          </p>
        </div>
      </div>
      <div className="absolute right-0 bottom-[28.2px] flex h-[66.3px] w-[19px] items-center justify-center rounded-l-[4px] border border-r-0 border-[#3578a8] bg-[#3d95d0]">
        <span className="rotate-180 text-[11.5px] leading-[17px] font-semibold tracking-[0px] [writing-mode:vertical-rl]">Feedback</span>
      </div>
    </footer>
  );
}

export default function App() {
  return (
    <div className="flex h-[2386px] w-[1631px] flex-col overflow-hidden bg-white font-['Liberation_Sans',Arial,sans-serif] text-[#3a3a3a] [zoom:1.7167]">
      <div className="mx-auto h-[1990.5px] w-[1141px] shrink-0">
        <Header />
        <div className="mt-[36.5px] flex">
          <Sidebar />
          <Main />
        </div>
        <About />
      </div>
      <Footer />
    </div>
  );
}
